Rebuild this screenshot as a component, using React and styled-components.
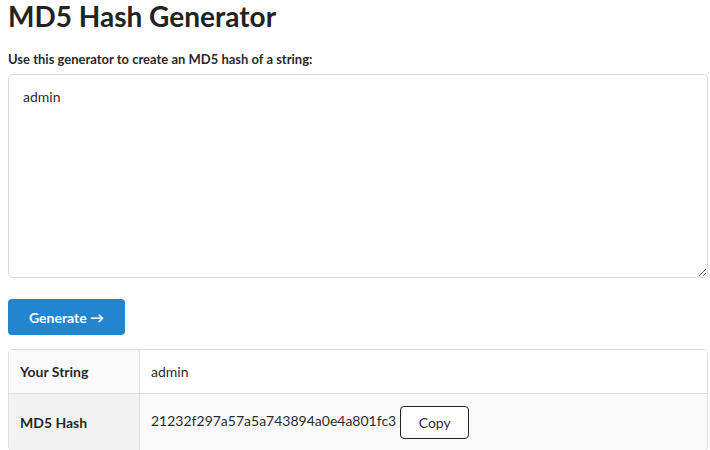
import React, { useState } from 'react';
import styled, { createGlobalStyle } from 'styled-components';

const GlobalStyle = createGlobalStyle`
  body {
    margin: 0;
    padding: 0 8px;
    font-family: Lato, "Open Sans", sans-serif;
    color: rgba(0, 0, 0, 0.87);
    background: #fff;
  }
`;

const Page = styled.div`
  width: 700px;
`;

const Title = styled.h1`
  margin: 0;
  font-size: 28px;
  line-height: 32px;
  font-weight: 700;
  color: #222;
`;

const Form = styled.div`
  margin-top: 19px;
  display: flex;
  flex-direction: column;
`;

const Label = styled.label`
  font-size: 13px;
  font-weight: 700;
  line-height: 17px;
  margin-bottom: 6px;
`;

const TextArea = styled.textarea`
  box-sizing: border-box;
  width: 100%;
  height: 204px;
  padding: 12px 14px;
  font-family: Lato, sans-serif;
  font-size: 14px;
  line-height: 20px;
  color: rgba(0, 0, 0, 0.87);
  border: 1px solid #dedede;
  border-radius: 4px;
  outline: none;
  resize: vertical;
`;

const PrimaryButton = styled.button`
  align-self: flex-start;
  margin-top: 21px;
  height: 36px;
  padding: 0 21px;
  background: #2185d0;
  color: #fff;
  border: none;
  border-radius: 4px;
  font-family: Lato, sans-serif;
  font-size: 14px;
  font-weight: 700;
  cursor: pointer;
`;

const Table = styled.table`
  margin-top: 14px;
  width: 100%;
  border-collapse: separate;
  border-spacing: 0;
  border: 1px solid #dedede;
  border-radius: 4px;
  font-size: 14px;
  overflow: hidden;
`;

const Row = styled.tr`
  background: ${p => (p.$striped ? '#f9f9f9' : '#fff')};
`;

const HeadCell = styled.td`
  width: 131px;
  box-sizing: border-box;
  padding: 0 11px;
  height: ${p => p.$h}px;
  font-weight: 700;
  background: ${p => (p.$striped ? '#f2f2f2' : '#f9f9f9')};
  border-right: 1px solid #dedede;
  border-top: ${p => (p.$first ? 'none' : '1px solid #dedede')};
`;

const Cell = styled.td`
  padding: 0 11px;
  height: ${p => p.$h}px;
  border-top: ${p => (p.$first ? 'none' : '1px solid #dedede')};
`;

const CopyButton = styled.button`
  height: 33px;
  width: 69px;
  margin-left: 4px;
  background: #fff;
  border: 1px solid #222;
  border-radius: 4px;
  font-family: Lato, sans-serif;
  font-size: 14px;
  color: rgba(0, 0, 0, 0.87);
  vertical-align: middle;
  cursor: pointer;
`;

export default function App() {
  const [text, setText] = useState('admin');
  return (
    <Page>
      <GlobalStyle />
      <Title>MD5 Hash Generator</Title>
      <Form>
        <Label>Use this generator to create an MD5 hash of a string:</Label>
        <TextArea value={text} onChange={e => setText(e.target.value)} />
        <PrimaryButton>Generate →</PrimaryButton>
      </Form>
      <Table>
        <tbody>
          <Row>
            <HeadCell $first $h={43}>Your String</HeadCell>
            <Cell $first $h={43}>admin</Cell>
          </Row>
          <Row $striped>
            <HeadCell $striped $h={56}>MD5 Hash</HeadCell>
            <Cell $h={56}>
              21232f297a57a5a743894a0e4a801fc3
              <CopyButton>Copy</CopyButton>
            </Cell>
          </Row>
        </tbody>
      </Table>
    </Page>
  );
}
